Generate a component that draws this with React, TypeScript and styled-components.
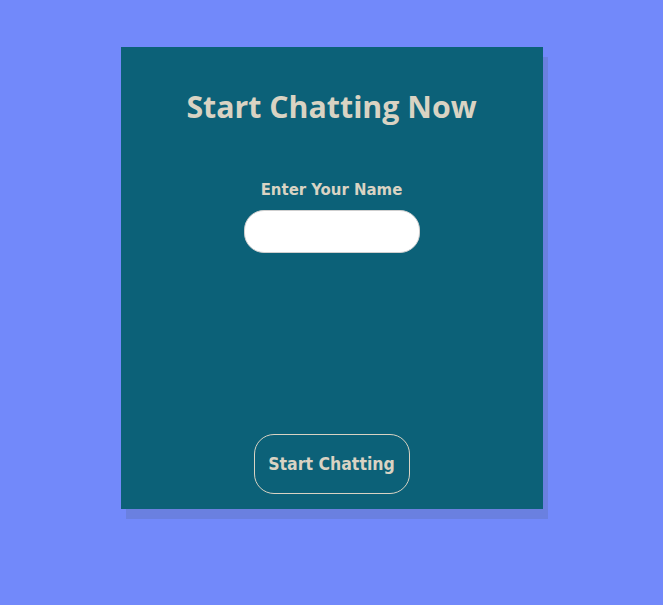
import React from "react";
import styled, { createGlobalStyle } from "styled-components";

const Global = createGlobalStyle`
  html, body { margin: 0; padding: 0; background: #7289fa; }
  body { font-family: "Open Sans", "Noto Sans", sans-serif; }
`;

const Page = styled.div`
  width: 663px;
  height: 605px;
  background: #7289fa;
  display: flex;
  justify-content: center;
  align-items: flex-start;
  padding-top: 47px;
  box-sizing: border-box;
`;

const Card = styled.div`
  width: 422px;
  height: 462px;
  background: #0c6178;
  box-shadow: 5px 10px 0 #6a80e0;
  display: flex;
  flex-direction: column;
  align-items: center;
  box-sizing: border-box;
  padding: 42px 0 15px;
  color: #d9d3c3;
`;

const Title = styled.h1`
  margin: 0;
  font-family: "Open Sans", sans-serif;
  font-weight: 700;
  font-size: 30.3px;
  line-height: 36px;
`;

const Label = styled.label`
  margin-top: 55px;
  font-family: "DejaVu Sans Condensed", "DejaVu Sans", sans-serif;
  font-weight: 700;
  font-size: 16.6px;
  line-height: 20px;
`;

const Input = styled.input`
  margin-top: 10px;
  width: 176px;
  height: 43px;
  box-sizing: border-box;
  border: 1px solid #cfcfcf;
  border-radius: 20px;
  background: #fff;
  outline: none;
  padding: 0 14px;
  font-size: 16px;
`;

const Button = styled.button`
  margin-top: auto;
  width: 156px;
  height: 60px;
  box-sizing: border-box;
  background: transparent;
  border: 1px solid #d9d3c3;
  border-radius: 20px;
  color: #d9d3c3;
  font-family: "DejaVu Sans Condensed", "DejaVu Sans", sans-serif;
  font-weight: 700;
  font-size: 17.5px;
  cursor: pointer;
`;

export default function App() {
  return (
    <>
      <Global />
      <Page>
        <Card>
          <Title>Start Chatting Now</Title>
          <Label htmlFor="name">Enter Your Name</Label>
          <Input id="name" type="text" />
          <Button>Start Chatting</Button>
        </Card>
      </Page>
    </>
  );
}
